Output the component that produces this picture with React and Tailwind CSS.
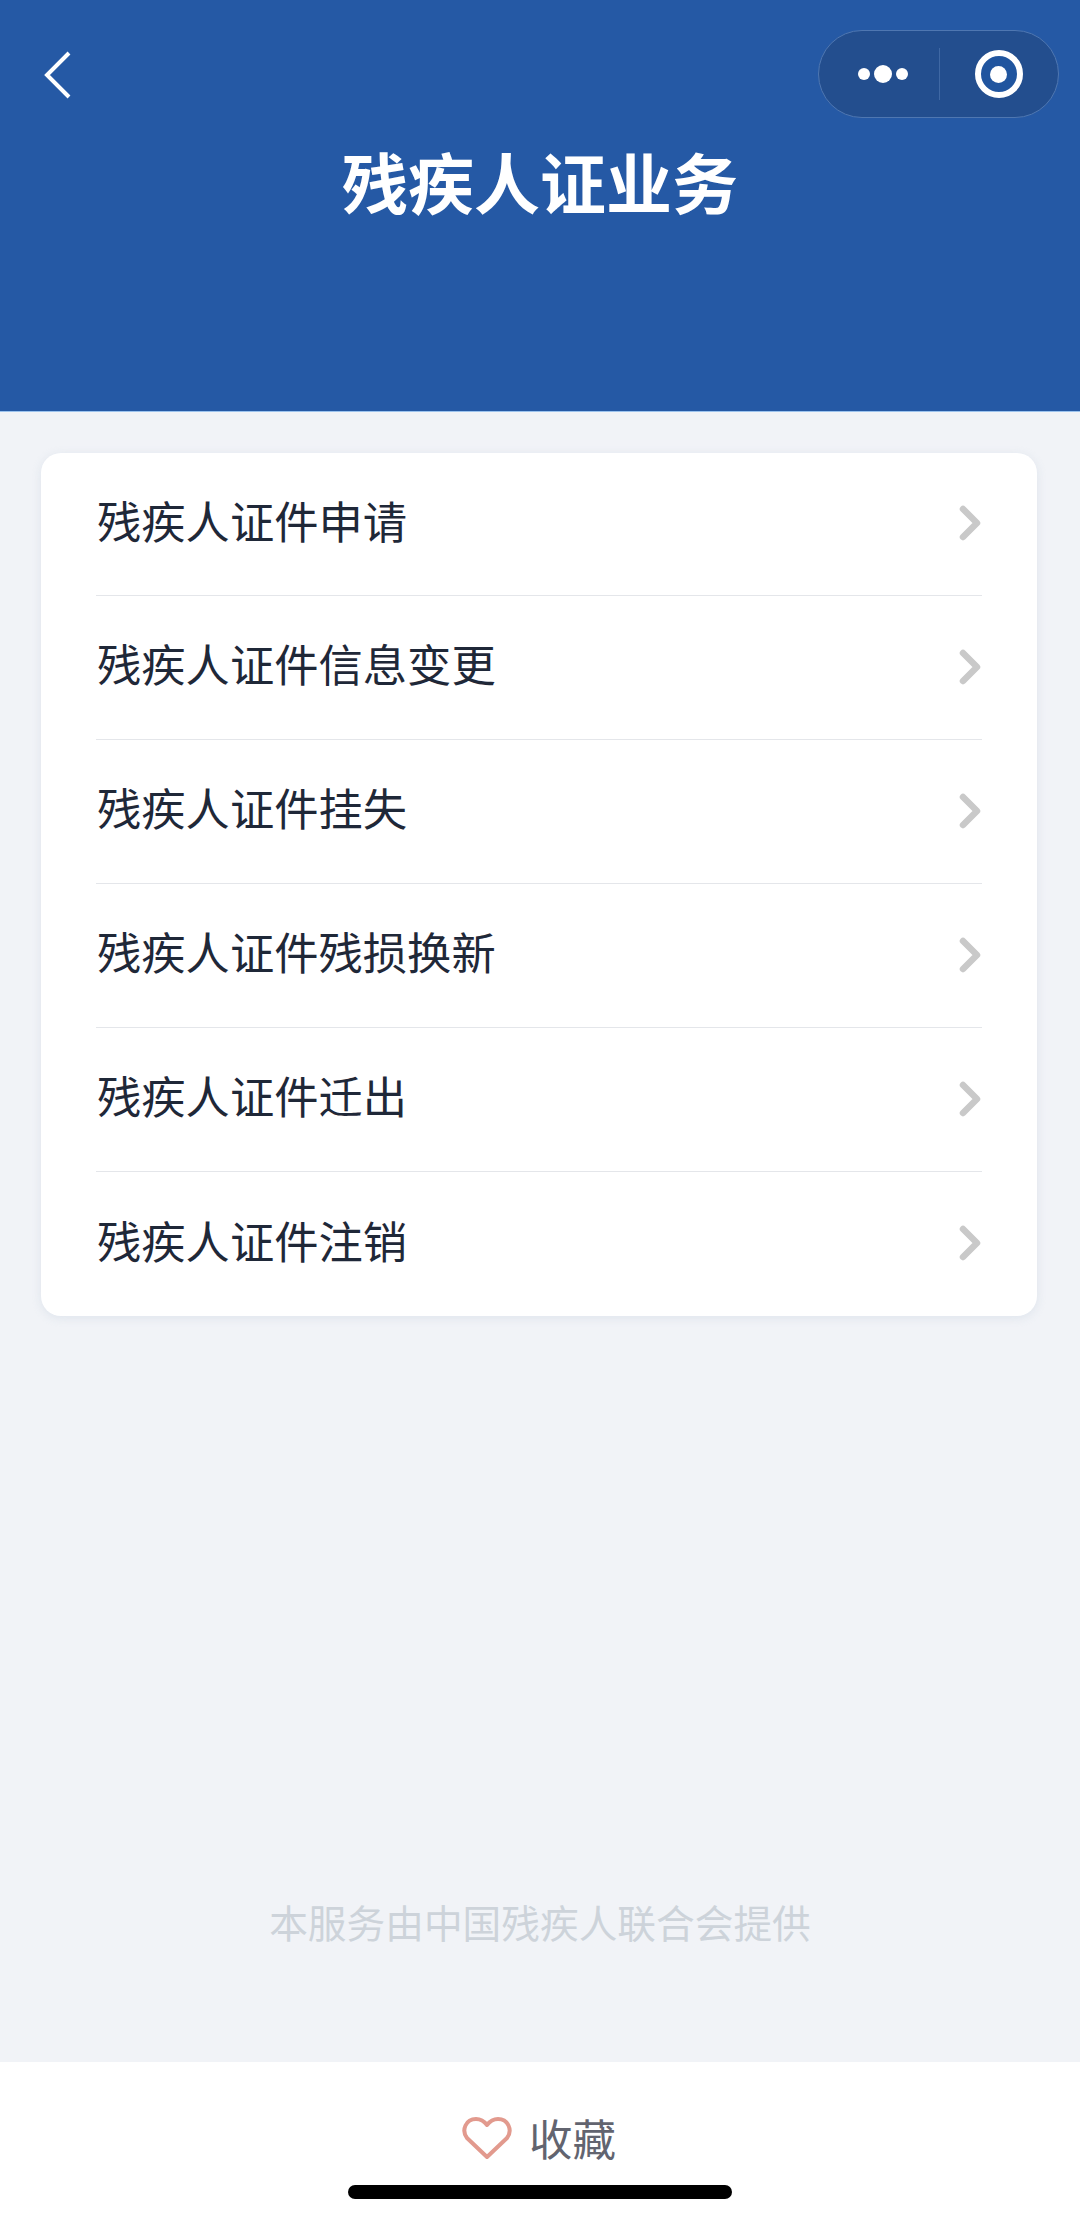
const cjk = "font-['Noto_Sans_CJK_SC','Liberation_Sans',sans-serif]";

const items = [
  "残疾人证件申请",
  "残疾人证件信息变更",
  "残疾人证件挂失",
  "残疾人证件残损换新",
  "残疾人证件迁出",
  "残疾人证件注销",
];

const Chevron = () => (
  <svg width="24" height="38" viewBox="0 0 24 38" fill="none" className="mb-[2px] -mr-[1px] shrink-0">
    <path d="M4 5 L18 19 L4 33" stroke="#c9c9c9" strokeWidth="6.5" strokeLinecap="round" strokeLinejoin="round" />
  </svg>
);

const Capsule = () => (
  <div className="flex h-[88px] w-[241px] items-center rounded-full border border-[#4f77b1] bg-[#234e8e]">
    <div className="flex w-[120px] items-center justify-end gap-[4px] pr-[31px]">
      <span className="h-[12px] w-[12px] rounded-full bg-white" />
      <span className="h-[18px] w-[18px] rounded-full bg-white" />
      <span className="h-[12px] w-[12px] rounded-full bg-white" />
    </div>
    <div className="h-[52px] w-px bg-[#3f68a4]" />
    <div className="flex flex-1 items-center justify-center pr-[1px]">
      <div className="flex h-[48px] w-[48px] items-center justify-center rounded-full border-[6px] border-white bg-[#20559f]">
        <span className="h-[17px] w-[17px] rounded-full bg-white" />
      </div>
    </div>
  </div>
);

const App = () => {
  return (
    <div className={`flex h-[2225px] w-[1080px] flex-col overflow-hidden bg-[#f1f3f7] ${cjk}`}>
      <header className="relative h-[412px] shrink-0 border-b border-[#9cc3ee] bg-[#2559a5]">
        <div className="flex items-start justify-between pl-[42px] pr-[21px] pt-[30px]">
          <svg width="30" height="48" viewBox="0 0 30 48" fill="none" className="mt-[21px]">
            <path d="M27 2 L5 24 L27 46" stroke="#ffffff" strokeWidth="4" />
          </svg>
          <Capsule />
        </div>
        <h1 className="mt-[14px] text-center text-[66px] leading-[96px] font-bold text-white">残疾人证业务</h1>
      </header>

      <main className="flex flex-1 flex-col pl-[41px] pt-[41px]">
        <ul className="w-[996px] rounded-[20px] bg-white shadow-[0_2px_10px_rgba(200,210,225,0.45)]">
          {items.map((label, i) => (
            <li key={label} className="px-[55px]">
              <div
                className={`flex items-center justify-between ${
                  i === 0 ? "h-[143px]" : "h-[144px]"
                } ${i < items.length - 1 ? "border-b border-[#e4e6ea]" : ""}`}
              >
                <span className="ml-[1px] pb-[8px] text-[44.3px] leading-none text-[#1f2838]">{label}</span>
                <Chevron />
              </div>
            </li>
          ))}
        </ul>
        <p className="mt-auto mb-[116px] pr-[41px] text-center text-[38.7px] leading-[50px] text-[#cdd3da]">
          本服务由中国残疾人联合会提供
        </p>
      </main>

      <footer className="flex h-[163px] shrink-0 flex-col items-center bg-white pt-[53px]">
        <div className="flex items-center gap-[17px] pr-[2px]">
          <svg width="50" height="44" viewBox="0 0 50 44" fill="none">
            <path
              d="M25 41 L5 22 C-1 14 4 3 14 3 C19 3 22 5 25 9 C28 5 31 3 36 3 C46 3 51 14 45 22 Z"
              stroke="#e29a8e"
              strokeWidth="4"
              strokeLinejoin="round"
            />
          </svg>
          <span className="text-[43.5px] leading-[46px] text-[#62646f]">收藏</span>
        </div>
        <div className="mt-[24px] h-[14px] w-[384px] rounded-full bg-black" />
      </footer>
    </div>
  );
};

export default App;
